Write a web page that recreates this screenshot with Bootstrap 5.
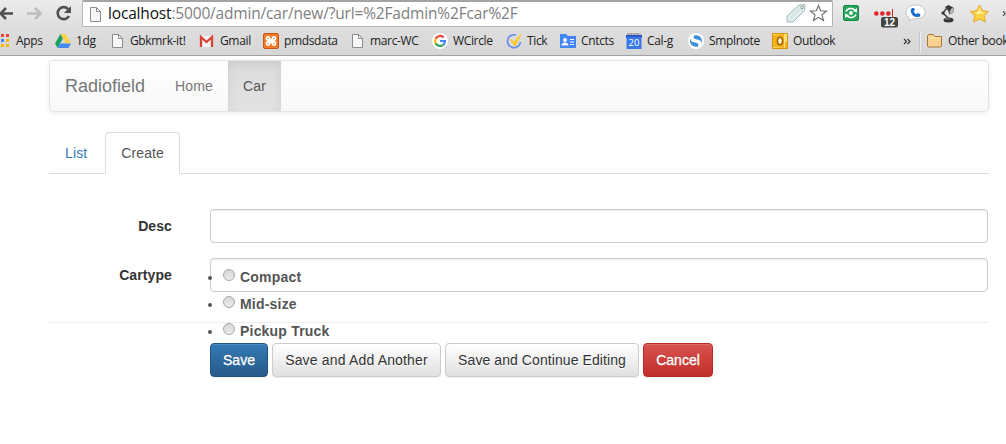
<!DOCTYPE html>
<html lang="en">
<head>
<meta charset="utf-8">
<meta name="viewport" content="width=device-width, initial-scale=1">
<title>Car - Radiofield</title>
<link href="https://cdn.jsdelivr.net/npm/bootstrap@5.3.0/dist/css/bootstrap.min.css" rel="stylesheet">
<style>
body{font:14px/20px "Liberation Sans",Arial,sans-serif;color:#333;background:#fff;height:444px;overflow:hidden}
svg{display:block;flex:none;overflow:visible}
/* browser chrome */
.chrome{height:56px;background:linear-gradient(#ececec,#dedede 50%,#d6d6d6);border-bottom:1px solid #a0a0a0;overflow:hidden;font-family:"Open Sans","Noto Sans",sans-serif}
.toolbar{height:28px}
.navicons{width:82px}
.omnibox{width:751px;height:27px;background:#fff;border:1px solid #b4b4b4;border-top:2px solid #a3a3a3;border-radius:2px;padding-left:6px}
.url{font-size:15.5px;line-height:22px;height:24px;margin-left:6px;color:#808080;width:679px;letter-spacing:-.17px}
.url b{font-weight:400;color:#111}
.bookmarks{height:26px;margin-left:-5px;font-size:12px;color:#222;letter-spacing:-.35px}
.bm{gap:5px;flex:none}
.w60{width:60px}.w54{width:54px}.w90{width:90px}.w64{width:64px}.w86{width:86px}.w83{width:83px}.w74{width:74px}.w66{width:66px}.w62{width:62px}.w84{width:84px}.w130{width:130px}
/* page */
.page{width:940px;margin:4px 0 0 49px}
.topbar{height:52px;padding:0;border:1px solid #e4e4e4;border-radius:4px;background:linear-gradient(#fff,#f8f8f8);box-shadow:inset 0 1px 0 rgba(255,255,255,.15),0 1px 5px rgba(0,0,0,.075)}
.topbar .navbar-brand{font-size:18px;line-height:20px;padding:15px;margin:0;color:#777}
.topbar .nav-link{padding:15px;line-height:20px;color:#777;letter-spacing:.15px}
.topbar .nav-link.active{color:#555;background:linear-gradient(#dbdbdb,#e2e2e2);box-shadow:inset 0 3px 9px rgba(0,0,0,.075)}
.tabs{margin-top:20px;border-color:#ddd}
.tabs .nav-link{padding:10px 15px;line-height:20px;margin-right:2px;margin-bottom:-1px;border-radius:4px 4px 0 0;color:#337ab7;letter-spacing:.12px}
.tabs .nav-link.active{color:#555;border-color:#ddd #ddd #fff}
.fields{margin-top:35px}
.field{height:34px;margin-bottom:15px}
.field-name{width:123px;margin-right:38px;padding-top:7px;text-align:right;font-weight:700;letter-spacing:.1px}
.field .form-control{width:778px;flex:none;height:34px;padding:6px 12px;font-size:14px;line-height:20px;border:1px solid #ccc;border-radius:4px;box-shadow:inset 0 1px 1px rgba(0,0,0,.075);color:#555}
.choices{overflow:visible;margin:0;font-weight:700;background:transparent}
.choices li{height:27px;padding-top:2px;gap:5px;position:relative}
.choices li::before{content:"";position:absolute;left:-15px;top:11px;width:4px;height:4px;border-radius:50%;background:#555}
.choices input{appearance:none;width:12px;height:12px;margin:2px 0 0;border:1px solid #a6a6a6;border-radius:50%;background:linear-gradient(#d6d6d6,#ececec)}
.rule{height:1px;background:#eee;margin-top:30px}
.actions{margin:20px 0 0 161px;gap:4px}
.actions .btn{height:34px;padding:6px 0;font-size:14px;line-height:20px;border-radius:4px;box-shadow:inset 0 1px 0 rgba(255,255,255,.15),0 1px 1px rgba(0,0,0,.075)}
.actions .save{width:58px;background:linear-gradient(#337ab7,#265a88);border-color:#245580;color:#fff;text-shadow:0 -1px 0 rgba(0,0,0,.2);-webkit-text-stroke:.3px #fff}
.actions .plain{background:linear-gradient(#fff,#e0e0e0);border-color:#ccc;color:#333;text-shadow:0 1px 0 #fff}
.actions .another{width:169px;letter-spacing:.17px}.actions .continue{width:194px;letter-spacing:.08px}
.actions .cancel{width:70px;background:linear-gradient(#d9534f,#c12e2a);border-color:#b92c28;color:#fff;text-shadow:0 -1px 0 rgba(0,0,0,.2);-webkit-text-stroke:.3px #fff}
.spaced{letter-spacing:.2px}
</style>
</head>
<body>
<header class="chrome">
<div class="toolbar d-flex">
<svg class="navicons" width="82" height="28" viewBox="0 0 82 28" fill="none" stroke-width="2.600"><path stroke="#505050" d="M13 13.500H1M6 8L.5 13.500 6 19"/><path stroke="#bdbdbd" d="M27 13.500H40M35 8l5.500 5.500L35 19"/><path stroke="#505050" d="M68.500 9.500A6 6 0 1 0 69 16"/><path fill="#505050" d="M71 6v7h-7z"/></svg>
<div class="omnibox d-flex align-items-center">
<svg width="13" height="17" viewBox="0 0 13 17"><path d="M1.500 1.500h6l4 4v10h-10z" fill="#f7f7f7" stroke="#8c8c8c"/><path d="M7.500 1.500v4h4" fill="none" stroke="#8c8c8c"/></svg>
<div class="url text-nowrap"><b>localhost</b>:5000/admin/car/new/?url=%2Fadmin%2Fcar%2F</div>
<svg width="42" height="24" viewBox="2 0 42 24"><path d="M2 14L14 3l6-.5-.5 6L8 20H2z" fill="#dfebeb" stroke="#a3b8b9"/><circle cx="17" cy="5.500" r="1.300" fill="#fff" stroke="#8b9fa0"/><path d="M5 16L15 7" stroke="#c6dadb"/><path d="M33.500 3.500l2.200 5.300 5.800.4-4.500 3.600 1.500 5.700-5-3.200-5 3.200 1.500-5.700-4.500-3.600 5.800-.4z" fill="#fff" stroke="#6c6c6c" stroke-width="1.100"/></svg>
</div>
<svg width="173" height="28" viewBox="833 0 173 28"><rect x="843.500" y="5.500" width="15" height="15" rx="1.500" fill="#27a65a" stroke="#16894a"/><g fill="none" stroke="#fff" stroke-width="1.600"><path d="M846 11.500c1.500-3.500 7-4 9-1M856 14.500c-1.500 3.500-7 4-9 1"/></g><circle cx="851" cy="13" r="1.900" fill="#fff"/><path d="M857 8v4.500l-4-1.500zM845 18v-4.500l4 1.500z" fill="#fff"/>
<g fill="#e02629"><circle cx="876.300" cy="13.500" r="2.300"/><circle cx="882.300" cy="13.500" r="2.300"/><circle cx="888.300" cy="13.500" r="2.300"/><path d="M892 9h1v9h-1z"/></g><rect x="881" y="17" width="17" height="10.500" rx="2" fill="#444"/><text x="889.500" y="26" text-anchor="middle" font-family="Liberation Sans" font-weight="700" font-size="10" fill="#fff">12</text>
<path d="M915.500 5c-5.500 0-9.500 3-9.500 7.300 0 2.500 1.300 4.500 3.500 5.700l-.5 3 4-2.200c7 .7 12-2.300 12-6.500 0-4.300-4-7.300-9.500-7.300z" fill="#fff" stroke="#c5c5c5"/><path d="M912 8c-3 2 0 10 6 9 2 0 3-2 2-3l-2.400-1-1.300 1.200c-1.300-.5-2.200-1.500-2.600-2.700l1.200-1.400L914 8z" fill="#1868d5"/>
<path d="M946.500 8.500l-3.500 4.500 6 6" fill="none" stroke="#4a4a4a" stroke-width="1.700"/><path d="M945 7l3.500-2 5.500 3-1 5-3.500 1.500-1.500-4z" fill="#3a3a3a"/><ellipse cx="951.800" cy="11" rx="1.700" ry="3.200" fill="#b5b5b5" transform="rotate(25 951.800 11)"/><circle cx="943" cy="13" r="1.600" fill="#333"/><ellipse cx="948.500" cy="20" rx="5" ry="2.500" fill="#333"/><path d="M945 19h5" stroke="#888"/>
<path d="M979.500 5l3 5.800 6 .8-4.300 4 1.200 6.400-5.900-3-5.900 3 1.200-6.400-4.300-4 6-.8z" fill="#ffd23f" stroke="#e9a52d" stroke-linejoin="round"/><path d="M979.500 7.500l2 4.500 4 .5-7 2-4-2 3.500-.5z" fill="#ffef9a"/><path d="M1003 11l2 2.500-2 2.500M1006 11l2 2.500-2 2.500" fill="none" stroke="#444" stroke-width="1.200"/></svg>
</div>
<div class="bookmarks d-flex align-items-center text-nowrap">
<div class="bm w60 d-flex align-items-center"><svg width="16" height="16" viewBox="0 0 16 16"><path fill="#ee4035" d="M6 1h3v3H6zM11 1h3v3h-3zM1 1h3v3H1z"/><path fill="#4587ec" d="M6 6h3v3H6z"/><path fill="#f4b400" d="M11 6h3v3h-3zM6 11h3v3H6zM11 11h3v3h-3z"/></svg><span>Apps</span></div>
<div class="bm w54 d-flex align-items-center"><svg width="16" height="16" viewBox="0 0 16 16"><path fill="#1ba261" d="M5.500 1L8 5.500 2.600 15 0 10.500z"/><path fill="#ffcf48" d="M5.500 1h5L16 10.500h-5z"/><path fill="#4688f4" d="M5.300 10.500H16L13.400 15H2.600z"/></svg><span>1dg</span></div>
<div class="bm w90 d-flex align-items-center"><svg width="16" height="16" viewBox="0 0 16 16"><path d="M3.500 1.500h6l4 4v9h-10z" fill="#f7f7f7" stroke="#8c8c8c"/><path d="M9.500 1.500v4h4" fill="none" stroke="#8c8c8c"/></svg><span>Gbkmrk-it!</span></div>
<div class="bm w64 d-flex align-items-center"><svg width="16" height="16" viewBox="0 0 16 16"><path d="M1 3h13v11H1z" fill="#f3f3f3"/><path d="M2 14V4l5.500 5L13 4v10" fill="none" stroke="#d94335" stroke-width="2.300"/></svg><span>Gmail</span></div>
<div class="bm w86 d-flex align-items-center"><svg width="16" height="16" viewBox="0 0 16 16"><rect x=".5" y=".5" width="15" height="15" rx="1.500" fill="#f37b2c" stroke="#c9550e"/><path d="M5 5.500l6 5M11 5.500l-6 5" stroke="#fff" stroke-width="3"/><g fill="#f37b2c" stroke="#fff" stroke-width="1.600"><circle cx="5" cy="5.500" r="1.600"/><circle cx="11" cy="5.500" r="1.600"/><circle cx="5" cy="10.500" r="1.600"/><circle cx="11" cy="10.500" r="1.600"/></g><path d="M6.500 6.500l3 3M9.500 6.500l-3 3" stroke="#fff" stroke-width="2"/></svg><span>pmdsdata</span></div>
<div class="bm w83 d-flex align-items-center"><svg width="16" height="16" viewBox="0 0 16 16"><path d="M3.500 1.500h6l4 4v9h-10z" fill="#f7f7f7" stroke="#8c8c8c"/><path d="M9.500 1.500v4h4" fill="none" stroke="#8c8c8c"/></svg><span>marc-WC</span></div>
<div class="bm w74 d-flex align-items-center"><svg width="16" height="16" viewBox="0 0 16 16"><circle cx="8" cy="8" r="8" fill="#fff"/><g fill="none" stroke-width="2.200"><path d="M11.700 4.500A5 5 0 0 0 3.600 5.700" stroke="#ea4335"/><path d="M3.600 5.700a5 5 0 0 0 0 4.600" stroke="#fbbc05"/><path d="M3.600 10.300A5 5 0 0 0 11.200 11.800" stroke="#34a853"/><path d="M11.200 11.800A5 5 0 0 0 12.900 8H8" stroke="#4285f4"/></g></svg><span>WCircle</span></div>
<div class="bm w54 d-flex align-items-center"><svg width="16" height="16" viewBox="0 0 16 16"><path d="M10 2A6.500 6.500 0 1 0 14.500 9" fill="none" stroke="#6389e8" stroke-width="1.600"/><path d="M4 6l4 3 7-8-6 12z" fill="#ffc928" stroke="#ffc928"/></svg><span>Tick</span></div>
<div class="bm w66 d-flex align-items-center"><svg width="16" height="16" viewBox="0 0 16 16"><path fill="#4285f4" d="M0 1h6l2 2h8v12H0z"/><circle cx="5" cy="7" r="1.900" fill="#fff"/><path fill="#fff" d="M1.500 12.500c0-4 7-4 7 0zM10 6h4v1h-4zM10 8.500h4v1h-4zM10 11h4v1h-4z"/></svg><span>Cntcts</span></div>
<div class="bm w62 d-flex align-items-center"><svg width="16" height="16" viewBox="0 0 16 16"><path fill="#b9b9b9" d="M1 0h14v3H1z"/><path fill="#2a56c6" d="M0 2h16v3H0z"/><path fill="#3b78e7" d="M.5 4h15v12H.5z"/><path stroke="#777" stroke-dasharray="1 2" d="M2 1h12"/><text x="8" y="12.800" font-size="9.500" text-anchor="middle" fill="#fff" letter-spacing="0">20</text></svg><span>Cal-g</span></div>
<div class="bm w84 d-flex align-items-center"><svg width="16" height="16" viewBox="0 0 16 16"><circle cx="8" cy="8" r="8" fill="#fff"/><path fill="#3b8fd6" d="M3 5c-1 3 1 4 4 4.500s4 1.500 3 4C4 15 0 9 3 5zM13 11c1-3-1-4-4-4.500S5 5 6 2.500C12 1 16 7 13 11z"/></svg><span>Smplnote</span></div>
<div class="bm w130 d-flex align-items-center"><svg width="16" height="16" viewBox="0 0 16 16"><path d="M.5.500h15v15H.5z" fill="#ffe07a" stroke="#d99100"/><path fill="#f5b21c" d="M1 2l11-1v14l-11-1zM13 9h2v6h-2z"/><ellipse cx="8" cy="8" rx="2.600" ry="3.800" fill="#fff2c3" stroke="#a35f00" stroke-width="1.600"/></svg><span>Outlook</span></div>
<svg width="25" height="26" viewBox="902 28 25 26"><path d="M904 39l2.500 2.500-2.500 2.500M907.500 39l2.500 2.500-2.500 2.500" fill="none" stroke="#333" stroke-width="1.200"/><path d="M919.500 32v20" stroke="#bfc8d2"/><path d="M920.500 32v20" stroke="#eee"/></svg>
<div class="bm d-flex align-items-center"><svg width="16" height="16" viewBox="0 0 16 16"><path d="M.5 13V3l1-1.500h5L8 3.500h6.500V13l-1 1h-12z" fill="#f8d090" stroke="#a87532"/><path d="M1.500 5h12.500" stroke="#ffe8bd"/></svg><span>Other book</span></div>
</div>
</header>
<main class="page">
<nav class="navbar topbar flex-nowrap justify-content-start">
<a class="navbar-brand" href="#">Radiofield</a>
<div class="nav flex-nowrap"><a class="nav-link" href="#">Home</a><a class="nav-link active" href="#">Car</a></div>
</nav>
<ul class="nav nav-tabs tabs"><li class="nav-item"><a class="nav-link" href="#">List</a></li><li class="nav-item"><a class="nav-link active" href="#">Create</a></li></ul>
<form>
<div class="fields">
<div class="field d-flex"><label class="field-name" for="desc">Desc</label><input id="desc" class="form-control" type="text"></div>
<div class="field d-flex mb-0"><span class="field-name">Cartype</span>
<ul class="form-control choices list-unstyled">
<li class="d-flex align-items-start"><input id="c1" name="cartype" type="radio"><label for="c1" class="spaced">Compact</label></li>
<li class="d-flex align-items-start"><input id="c2" name="cartype" type="radio"><label for="c2" class="spaced">Mid-size</label></li>
<li class="d-flex align-items-start text-nowrap"><input id="c3" name="cartype" type="radio"><label for="c3" class="spaced">Pickup Truck</label></li>
</ul></div>
</div>
<div class="rule"></div>
<div class="actions d-flex"><button type="button" class="btn save">Save</button><button type="button" class="btn plain another">Save and Add Another</button><button type="button" class="btn plain continue">Save and Continue Editing</button><button type="button" class="btn cancel">Cancel</button></div>
</form>
</main>
<script src="https://cdn.jsdelivr.net/npm/bootstrap@5.3.0/dist/js/bootstrap.bundle.min.js"></script>
</body>
</html>
